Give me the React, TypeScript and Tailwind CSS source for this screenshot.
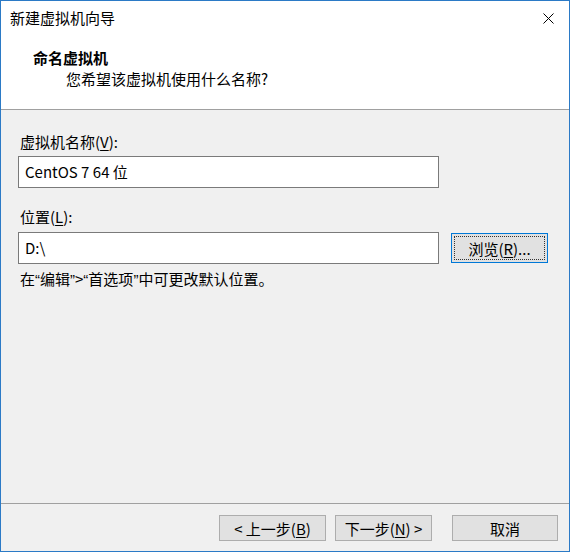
const font = { fontFamily: '"Noto Sans CJK SC", "Noto Sans", sans-serif' };
const latin = { fontFamily: '"Liberation Sans", sans-serif' };

function Key({ k }: { k: string }) {
  return <span className="underline underline-offset-2">{k}</span>;
}

function Q({ c }: { c: string }) {
  return <span style={latin}>{c}</span>;
}

function Button({ children, width }: { children: React.ReactNode; width: string }) {
  return (
    <button className={`${width} h-[26px] bg-[#e1e1e1] border border-[#adadad] text-[15px] leading-none text-black flex items-center justify-center`}>
      {children}
    </button>
  );
}

export default function App() {
  return (
    <div
      className="w-[570px] h-[552px] flex flex-col border border-[#2b7ac6] bg-[#f0f0f0] text-black text-[15px] overflow-hidden"
      style={font}
    >
      {/* title bar */}
      <div className="h-[30px] bg-white flex items-center justify-between pl-[9px] pr-[15px] shrink-0">
        <span className="leading-[20px] pt-[4px]">新建虚拟机向导</span>
        <svg width="11" height="11" viewBox="0 0 11 11" className="mt-[4px]">
          <path d="M0.5 0.5 L10.5 10.5 M10.5 0.5 L0.5 10.5" stroke="#000" strokeWidth="1" />
        </svg>
      </div>

      {/* header */}
      <div className="h-[79px] bg-white border-b border-[#a0a0a0] pl-[32px] pt-[17px] shrink-0">
        <div className="font-bold leading-[20px]">命名虚拟机</div>
        <div className="leading-[20px] mt-[1px] ml-[33px]">您希望该虚拟机使用什么名称?</div>
      </div>

      {/* body */}
      <div className="flex-1 pl-[17px] pt-[22px] border-b border-[#a0a0a0]">
        <div className="leading-[20px] ml-[2px]">
          虚拟机名称(<Key k="V" />):
        </div>
        <div className="mt-[4px] w-[421px] h-[32px] bg-white border border-[#7a7a7a] flex items-center pl-[6px]">
          CentOS 7 64 位
        </div>

        <div className="leading-[20px] mt-[19px] ml-[2px]">
          位置(<Key k="L" />):
        </div>
        <div className="mt-[5px] flex items-center gap-[12px]">
          <div className="w-[421px] h-[32px] bg-white border border-[#7a7a7a] flex items-center pl-[6px]">
            D:\
          </div>
          <button className="w-[97px] h-[30px] bg-[#e1e1e1] border border-[#0078d7] p-[2px]">
            <div className="w-full h-full border border-dotted border-[#333] flex items-center justify-center leading-none">
              浏览(<Key k="R" />)...
            </div>
          </button>
        </div>

        <div className="leading-[20px] mt-[5px] ml-[2px]">
          在<Q c="“" />编辑<Q c="”" />&gt;<Q c="“" />首选项<Q c="”" />中可更改默认位置。
        </div>
      </div>

      {/* footer */}
      <div className="h-[47px] shrink-0 flex items-start justify-end pt-[11px] pr-[11px]">
        <Button width="w-[107px]">
          &lt; 上一步(<Key k="B" />)
        </Button>
        <div className="w-[9px]" />
        <Button width="w-[97px]">
          下一步(<Key k="N" />) &gt;
        </Button>
        <div className="w-[20px]" />
        <Button width="w-[106px]">取消</Button>
      </div>
    </div>
  );
}
